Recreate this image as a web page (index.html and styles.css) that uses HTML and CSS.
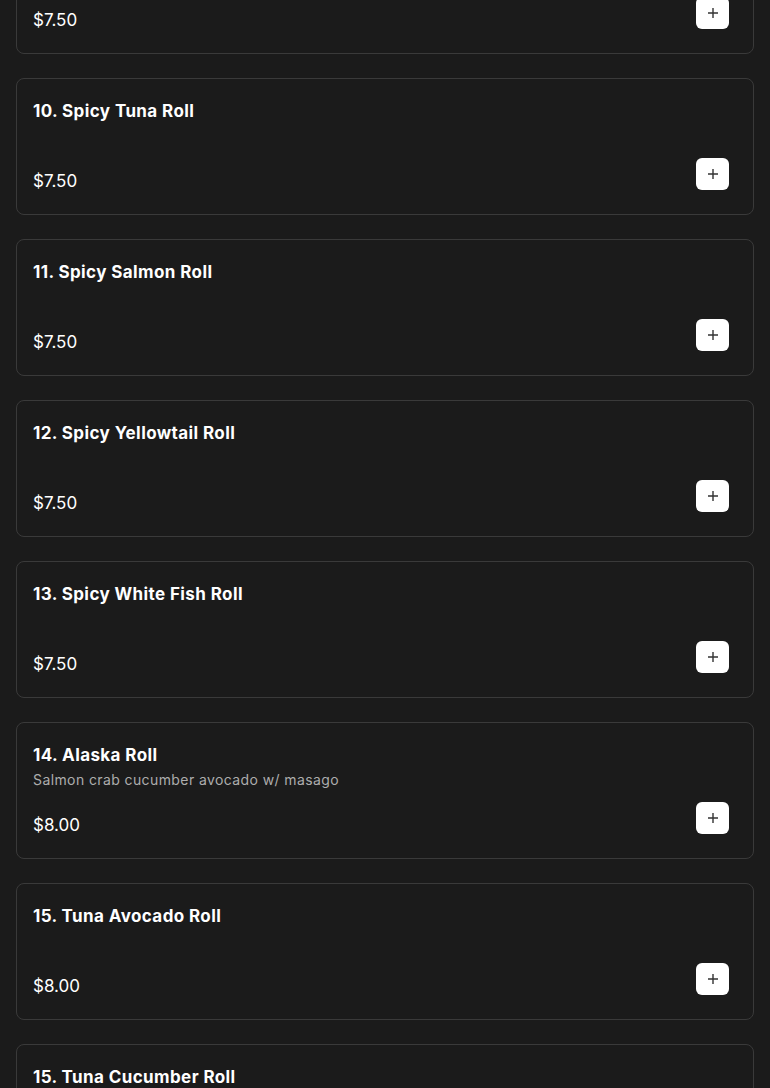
FILE: index.html
```html
<!DOCTYPE html>
<html lang="en">
<head>
    <meta charset="UTF-8">
    <meta name="viewport" content="width=device-width, initial-scale=1.0">
    <title>Menu</title>
    <link rel="stylesheet" href="styles.css">
</head>
<body>
    <div class="lista">
        <div class="item">
            <div class="topo">
                <div class="nome">9. California Roll</div>
                <div class="desc"></div>
            </div>
            <div class="rodape">
                <span class="preco">$7.50</span>
                <button class="mais"><svg width="12" height="12" viewBox="0 0 12 12"><path d="M6 1v10M1 6h10" stroke="#333" stroke-width="1.4"/></svg></button>
            </div>
        </div>
        <div class="item">
            <div class="topo">
                <div class="nome">10. Spicy Tuna Roll</div>
                <div class="desc"></div>
            </div>
            <div class="rodape">
                <span class="preco">$7.50</span>
                <button class="mais"><svg width="12" height="12" viewBox="0 0 12 12"><path d="M6 1v10M1 6h10" stroke="#333" stroke-width="1.4"/></svg></button>
            </div>
        </div>
        <div class="item">
            <div class="topo">
                <div class="nome">11. Spicy Salmon Roll</div>
                <div class="desc"></div>
            </div>
            <div class="rodape">
                <span class="preco">$7.50</span>
                <button class="mais"><svg width="12" height="12" viewBox="0 0 12 12"><path d="M6 1v10M1 6h10" stroke="#333" stroke-width="1.4"/></svg></button>
            </div>
        </div>
        <div class="item">
            <div class="topo">
                <div class="nome">12. Spicy Yellowtail Roll</div>
                <div class="desc"></div>
            </div>
            <div class="rodape">
                <span class="preco">$7.50</span>
                <button class="mais"><svg width="12" height="12" viewBox="0 0 12 12"><path d="M6 1v10M1 6h10" stroke="#333" stroke-width="1.4"/></svg></button>
            </div>
        </div>
        <div class="item">
            <div class="topo">
                <div class="nome">13. Spicy White Fish Roll</div>
                <div class="desc"></div>
            </div>
            <div class="rodape">
                <span class="preco">$7.50</span>
                <button class="mais"><svg width="12" height="12" viewBox="0 0 12 12"><path d="M6 1v10M1 6h10" stroke="#333" stroke-width="1.4"/></svg></button>
            </div>
        </div>
        <div class="item">
            <div class="topo">
                <div class="nome">14. Alaska Roll</div>
                <div class="desc">Salmon crab cucumber avocado w/ masago</div>
            </div>
            <div class="rodape">
                <span class="preco">$8.00</span>
                <button class="mais"><svg width="12" height="12" viewBox="0 0 12 12"><path d="M6 1v10M1 6h10" stroke="#333" stroke-width="1.4"/></svg></button>
            </div>
        </div>
        <div class="item">
            <div class="topo">
                <div class="nome">15. Tuna Avocado Roll</div>
                <div class="desc"></div>
            </div>
            <div class="rodape">
                <span class="preco">$8.00</span>
                <button class="mais"><svg width="12" height="12" viewBox="0 0 12 12"><path d="M6 1v10M1 6h10" stroke="#333" stroke-width="1.4"/></svg></button>
            </div>
        </div>
        <div class="item">
            <div class="topo">
                <div class="nome">15. Tuna Cucumber Roll</div>
                <div class="desc"></div>
            </div>
            <div class="rodape">
                <span class="preco">$8.00</span>
                <button class="mais"><svg width="12" height="12" viewBox="0 0 12 12"><path d="M6 1v10M1 6h10" stroke="#333" stroke-width="1.4"/></svg></button>
            </div>
        </div>
    </div>
</body>
</html>
```

FILE: styles.css
```css
body {
    margin: 0;
    background-color: #1b1b1b;
    font-family: Inter, "Noto Sans", sans-serif;
    color: #fff;
    overflow: hidden;
}

.lista {
    display: flex;
    flex-direction: column;
    gap: 24px;
    padding: 0 16px;
    margin-top: -83px;
}

.item {
    height: 137px;
    box-sizing: border-box;
    border: 1px solid #3a3a3a;
    border-radius: 8px;
    padding: 20px 24px 24px 16px;
    display: flex;
    flex-direction: column;
    justify-content: space-between;
}

.nome {
    font-size: 17px;
    font-weight: 700;
    line-height: 24px;
    letter-spacing: 0.4px;
}

.desc {
    font-size: 14px;
    line-height: 20px;
    letter-spacing: 0.4px;
    color: #adadad;
    margin-top: 3px;
}

.rodape {
    display: flex;
    justify-content: space-between;
    align-items: flex-end;
}

.preco {
    font-size: 17px;
    line-height: 18px;
}

.mais {
    width: 33px;
    height: 32px;
    border: none;
    border-radius: 6px;
    background-color: #fff;
    display: flex;
    align-items: center;
    justify-content: center;
    padding: 0;
    cursor: pointer;
}
```
